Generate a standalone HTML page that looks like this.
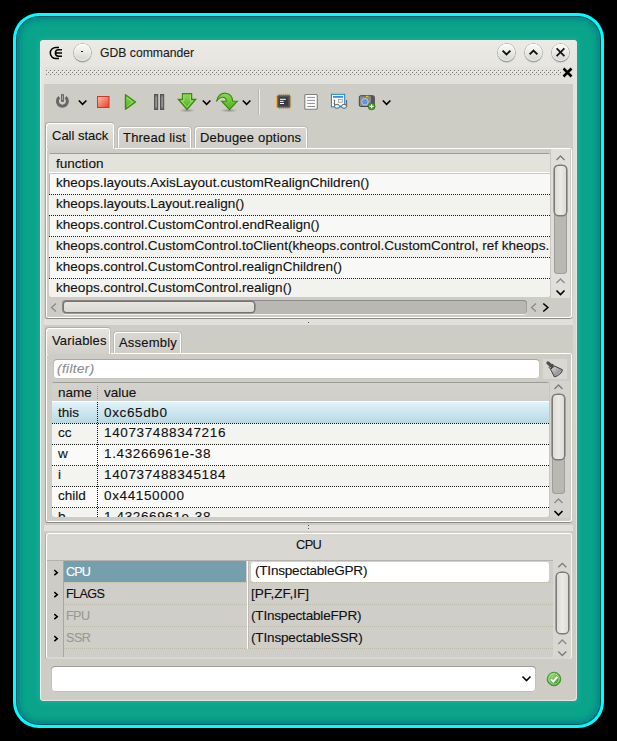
<!DOCTYPE html>
<html><head><meta charset="utf-8">
<style>
*{box-sizing:border-box;margin:0;padding:0}
html,body{width:617px;height:741px;overflow:hidden;background:#000}
body{position:relative;font-family:"Liberation Sans",sans-serif;font-size:13px;color:#1a1a1a;-webkit-text-stroke:0.12px currentColor}
.a{position:absolute}
#frame{left:13px;top:13px;width:591px;height:715px;border-radius:26px;background:#00ffff}
#f2{left:16px;top:16px;width:585px;height:709px;border-radius:23px;background:#005a5e}
#f3{left:17px;top:17px;width:583px;height:707px;border-radius:22px;background:#068a8c}
#f4{left:19px;top:19px;width:579px;height:703px;border-radius:20px;background:#0aa48a;box-shadow:inset 0 0 0 1px #06908c,inset 0 0 4px 3px #069488}
#win{left:40px;top:40px;width:537px;height:661px;border-radius:4px;background:#cdccc5;overflow:hidden;
 box-shadow:inset 1px 1px 0 #f4f0ec, inset -1px -1px 0 #e8e4e0, 0 0 0 2px #12a894, 0 0 4px 4px rgba(16,168,148,.9)}
#title{left:0;top:0;width:537px;height:27px;background:linear-gradient(#eceae5,#e6e5df)}
.t{white-space:nowrap}
.crow{position:absolute;left:0;width:489px;height:22px;border-bottom:1px dotted #bdbca8}
.crow span{position:absolute;white-space:nowrap;font-size:13.55px;color:#111;top:3px}
.arr{position:absolute;left:6px;top:8px}

.vrow{position:absolute;left:0;right:0;height:21px;border-bottom:1px dotted #1a1a1a}
.vrow span{position:absolute;white-space:nowrap;font-size:13.55px;color:#111;top:1px}
.vrow .c1{left:6px}.vrow .c2{left:52px;letter-spacing:0.6px}

.tab{position:absolute;border:1px solid #b6b4ae;border-bottom:none;border-radius:4px 4px 0 0;box-shadow:inset 1px 1px 0 #fff,inset -1px 0 0 #fff;}
.tab.sel{background:linear-gradient(#e6e5e0,#d0cfc9);border-color:#b0aea9 #c4c3bd #c4c3bd #a8a6a2}
.tab.uns{background:linear-gradient(#d9d7d1,#cfcdc7);border-color:#bdbbb6}
.tab span{position:absolute;white-space:nowrap;font-size:13px;color:#111}
.pane{position:absolute;border-radius:3px;box-shadow:inset 1px 1px 0 #fff,inset -1px -1px 0 #fff;border-left:1px solid #a8a6a2;border-bottom:1px solid #8a8884;}
.tree{position:absolute;background:#f8f8f6;border-radius:3px;overflow:hidden;box-shadow:inset 0 1px 0 #a09e9a,inset 1px 0 0 #b8b6b2}
.hdr{position:absolute;left:0;top:0;right:0;background:linear-gradient(#e4e4dd,#e2e2db);border-bottom:1px solid #fff;border-top:1px solid #9c9b96}
.hdr span,.row span{position:absolute;white-space:nowrap;font-size:13.55px;color:#111}
.row{position:absolute;left:0;right:0;height:21px;border-bottom:1px dotted #1a1a1a}
.row.alt{background:#f2f2ef}
.vtrack{position:absolute;background:#b9b8b2;border-radius:4px;box-shadow:inset 0 0 0 1px #9f9e98}
.slider{position:absolute;border-radius:4px;background:linear-gradient(90deg,#dddcd6,#ebeae5 50%,#dcdbd5);box-shadow:0 0 0 1.6px #7c7b78}
.hslider{position:absolute;border-radius:3px;background:linear-gradient(#e6e5e0,#dad9d4);box-shadow:0 0 0 1.6px #777673}

.btn{width:17px;height:17px;border-radius:50%;background:linear-gradient(#fbfbfa,#e9e9e6 50%,#d2d2ce);box-shadow:0 0 0 0.8px #a8a8a4,0 1.3px 1.2px rgba(0,0,0,.45),inset 0 1px 0 #fff,inset 0 -1px 1px rgba(255,255,255,.6)}
.btn i,.btn svg{position:absolute;left:0;top:0}
#handle{left:4px;top:27px;width:529px;height:17px;background-color:#e2e1db}

</style></head><body>
<div id="frame" class="a"></div><div id="f2" class="a"></div><div id="f3" class="a"></div><div id="f4" class="a"></div>
<div id="win" class="a">
  <div id="title" class="a"></div>
  <div class="a" style="left:1px;top:27px;width:3px;height:500px;background:linear-gradient(#e6e5e0,#dddcd6 30%,#cdccc5)"></div>
  <div class="a" style="left:533px;top:27px;width:3px;height:500px;background:linear-gradient(#e6e5e0,#dddcd6 30%,#cdccc5)"></div>
  <svg class="a" style="left:6px;top:4px" width="20" height="18" viewBox="0 0 20 18"><g fill="none" stroke="#000" stroke-width="1.5"><path d="M13,3.4H9.9A5.6,5.6 0 0 0 9.9,14.6H13"/><path d="M16,5.8H12.6A3.2,3.2 0 0 0 12.6,12.2H16M9.5,9H16"/></g></svg>
  <div class="a btn" style="left:33.5px;top:3.5px"><i style="left:7.6px;top:7px;width:1.8px;height:1.8px;background:#000;border-radius:1px"></i></div>
  <div class="a t" style="left:60px;top:6px;font-size:12.2px;color:#1c1c1c">GDB commander</div>
  <div class="a btn" style="left:457.5px;top:3.5px"><svg width="17" height="17"><path d="M4.6,6.6L8.5,10.5L12.4,6.6" fill="none" stroke="#111" stroke-width="1.9"/></svg></div>
  <div class="a btn" style="left:484.5px;top:3.5px"><svg width="17" height="17"><path d="M4.6,10.4L8.5,6.5L12.4,10.4" fill="none" stroke="#111" stroke-width="1.9"/></svg></div>
  <div class="a btn" style="left:511.5px;top:3.5px"><svg width="17" height="17"><path d="M4.6,4.4L12.4,12.2M12.4,4.4L4.6,12.2" fill="none" stroke="#111" stroke-width="1.7"/></svg></div>
  <div id="handle" class="a"><svg class="a" style="left:0;top:0" width="529" height="17"><defs><pattern id="dp" width="4" height="4" patternUnits="userSpaceOnUse" x="2" y="3"><rect x="0" y="0" width="1" height="1" fill="#7d7d79"/><rect x="2" y="2" width="1" height="1" fill="#7d7d79"/><rect x="1" y="1" width="1" height="1" fill="#f2f1ed"/></pattern></defs><rect x="2" y="3" width="515" height="5" fill="url(#dp)"/></svg></div>
  <svg class="a" style="left:522px;top:27px" width="11" height="11"><path d="M1.5,1.5L9.5,9.5M9.5,1.5L1.5,9.5" stroke="#000" stroke-width="2.6"/></svg>
</div>

<svg class="a" style="left:0;top:84px" width="617" height="36" viewBox="0 84 617 36">
 <defs>
  <linearGradient id="gR" x1="0" y1="0" x2="1" y2="1"><stop offset="0" stop-color="#fcc0b0"/><stop offset="1" stop-color="#f03a20"/></linearGradient>
  <linearGradient id="gG" x1="0" y1="0" x2="0" y2="1"><stop offset="0" stop-color="#8fd65a"/><stop offset="1" stop-color="#4fb01a"/></linearGradient>
  <linearGradient id="gP" x1="0" y1="0" x2="1" y2="0"><stop offset="0" stop-color="#555"/><stop offset=".5" stop-color="#777"/><stop offset="1" stop-color="#555"/></linearGradient>
  <radialGradient id="gS"><stop offset="0" stop-color="#000" stop-opacity=".28"/><stop offset="1" stop-color="#000" stop-opacity="0"/></radialGradient>
 </defs>
 <!-- power -->
 <path d="M59.3,97.3A5,5 0 1 0 65.5,97.3" fill="none" stroke="#686868" stroke-width="3"/>
 <rect x="61" y="94" width="3" height="8" rx="1" fill="#686868"/>
 <path d="M62.5,95.5V100" stroke="#bdbdbd" stroke-width="0.8"/>
 <!-- chevrons -->
 <path d="M78.8,100.5L82.6,104.3L86.4,100.5" fill="none" stroke="#000" stroke-width="1.6"/>
 <path d="M202.8,100.5L206.6,104.3L210.4,100.5" fill="none" stroke="#000" stroke-width="1.6"/>
 <path d="M242.8,100.5L246.6,104.3L250.4,100.5" fill="none" stroke="#000" stroke-width="1.6"/>
 <path d="M382.8,100.5L386.6,104.3L390.4,100.5" fill="none" stroke="#000" stroke-width="1.6"/>
 <!-- stop -->
 <rect x="97.5" y="96.5" width="11.5" height="11" fill="url(#gR)" stroke="#c43a28" stroke-width="1"/>
 <!-- play -->
 <path d="M125.5,94.8L135.5,102L125.5,109.2Z" fill="url(#gG)" stroke="#3c8c12" stroke-width="1.4" stroke-linejoin="round"/>
 <path d="M127,97.5L132.8,102L127,106.5" fill="none" stroke="#a8e080" stroke-width="0.8"/>
 <!-- pause -->
 <rect x="154.5" y="94.5" width="3.2" height="15" fill="url(#gP)" stroke="#545454" stroke-width="1"/>
 <rect x="160.5" y="94.5" width="3.2" height="15" fill="url(#gP)" stroke="#545454" stroke-width="1"/>
 <path d="M156.1,96.5V107.5M162.1,96.5V107.5" stroke="#c9c9c9" stroke-width="0.7"/>
 <!-- step into -->
 <ellipse cx="187" cy="110.5" rx="8" ry="2" fill="url(#gS)"/>
 <path d="M182.5,93.7H191.6V99.5H195.6L187,109.4L178.4,99.5H182.5Z" fill="url(#gG)" stroke="#3a8c10" stroke-width="1.3" stroke-linejoin="miter"/>
 <path d="M183.8,95V100.8H181.4L187,107.3L192.6,100.8H190.3V95" fill="none" stroke="#b0e590" stroke-width="0.8"/>
 <!-- step over -->
 <ellipse cx="229" cy="110.5" rx="9" ry="2" fill="url(#gS)"/>
 <path d="M216.5,101.5C217.5,95 222,92.8 225.5,93.2C230,93.7 232.5,97 232.7,101.2H237.3L229.5,109.6L221.7,101.2H226.5C226.3,98.5 224.5,97 222.5,97.2C220,97.4 218,99 216.5,101.5Z" fill="url(#gG)" stroke="#3a8c10" stroke-width="1.1" stroke-linejoin="miter"/>
 <!-- separator -->
 <path d="M258.5,89V115" stroke="#b8b6b0" stroke-width="1"/><path d="M259.5,89V115" stroke="#f0efea" stroke-width="1"/>
 <!-- cpu -->
 <g fill="#e8a33a">
  <rect x="279" y="93.8" width="1.2" height="1.2"/><rect x="281" y="93.8" width="1.2" height="1.2"/><rect x="283" y="93.8" width="1.2" height="1.2"/><rect x="285" y="93.8" width="1.2" height="1.2"/><rect x="287" y="93.8" width="1.2" height="1.2"/><rect x="289" y="93.8" width="1.2" height="1.2"/>
  <rect x="279" y="108" width="1.2" height="1.2"/><rect x="281" y="108" width="1.2" height="1.2"/><rect x="283" y="108" width="1.2" height="1.2"/><rect x="285" y="108" width="1.2" height="1.2"/><rect x="287" y="108" width="1.2" height="1.2"/><rect x="289" y="108" width="1.2" height="1.2"/>
  <rect x="276" y="96" width="1.2" height="1.2"/><rect x="276" y="98" width="1.2" height="1.2"/><rect x="276" y="100" width="1.2" height="1.2"/><rect x="276" y="102" width="1.2" height="1.2"/><rect x="276" y="104" width="1.2" height="1.2"/><rect x="276" y="106" width="1.2" height="1.2"/>
  <rect x="290.2" y="96" width="1.2" height="1.2"/><rect x="290.2" y="98" width="1.2" height="1.2"/><rect x="290.2" y="100" width="1.2" height="1.2"/><rect x="290.2" y="102" width="1.2" height="1.2"/><rect x="290.2" y="104" width="1.2" height="1.2"/><rect x="290.2" y="106" width="1.2" height="1.2"/>
 </g>
 <rect x="277.5" y="95.3" width="12.5" height="12.3" rx="1" fill="#4f5256" stroke="#6a6d71" stroke-width="0.8"/>
 <rect x="279.3" y="97.2" width="8.8" height="8.5" fill="#3a3c40"/>
 <path d="M280,99.3H285.8M280,101.4H283.6M280,103.5H284" stroke="#fff" stroke-width="1"/>
 <!-- document -->
 <rect x="304.8" y="94.5" width="12.5" height="14.7" rx="1" fill="#fff" stroke="#7e7e7b" stroke-width="1.1"/>
 <path d="M307.2,97.4H315M307.2,100.4H315M307.2,103.4H315M307.2,106.5H315" stroke="#7f7f7f" stroke-width="0.9"/>
 <!-- window glasses -->
 <rect x="331.4" y="94.3" width="13.3" height="12.5" fill="#fff" stroke="#1b80cc" stroke-width="1"/>
 <rect x="333" y="96" width="10" height="1.8" fill="#2b90e0"/>
 <rect x="338.5" y="99.5" width="4" height="2.8" fill="#eee" stroke="#888" stroke-width="0.6"/>
 <path d="M334,99.5V101M334,102.5V104" stroke="#777" stroke-width="0.7"/>
 <path d="M334.6,100V106.5M346.6,100V106.5" stroke="#555" stroke-width="0.9"/>
 <ellipse cx="337" cy="106.3" rx="2.6" ry="2" fill="#d8f0fa" stroke="#5a5a5a" stroke-width="0.9"/>
 <ellipse cx="344" cy="106.3" rx="2.6" ry="2" fill="#d8f0fa" stroke="#5a5a5a" stroke-width="0.9"/>
 <rect x="339.8" y="105.5" width="1.5" height="1.2" fill="#1b80cc"/>
 <!-- camera -->
 <rect x="359.3" y="95.7" width="15" height="10.8" rx="1.5" fill="#8a8a8a" stroke="#3a3a3a" stroke-width="0.9"/>
 <rect x="371" y="96" width="3" height="10" fill="#555"/>
 <rect x="366" y="95.8" width="2.5" height="1.3" fill="#f0c020"/>
 <circle cx="364.9" cy="101.8" r="3.3" fill="#5b97e0" stroke="#d8d8d8" stroke-width="0.8"/>
 <circle cx="371.6" cy="106.4" r="3.5" fill="#3e9a22" stroke="#2a7010" stroke-width="0.6"/>
 <path d="M371.6,104.3V108.5M369.5,106.4H373.7" stroke="#fff" stroke-width="1.3"/>
</svg>

<!-- tabs 1 -->
<div class="tab uns" style="left:117px;top:126px;width:75px;height:23px"><span style="left:5px;top:3px;letter-spacing:0.2px">Thread list</span></div>
<div class="tab uns" style="left:194px;top:126px;width:114px;height:23px"><span style="left:5px;top:3px;letter-spacing:0.2px">Debugee options</span></div>
<div class="pane" style="left:45px;top:148px;width:527px;height:171px"></div>
<div class="tab sel" style="left:45px;top:122px;width:70px;height:27px"><span style="left:6px;top:5px">Call stack</span></div>
<!-- tree 1 -->
<div class="tree" style="left:49px;top:153px;width:501px;height:144px">
 <div class="hdr" style="height:20px;box-shadow:0 1px 0 #c9c8c3"><span style="left:7px;top:2px">function</span></div>
 <div class="row" style="top:20px;height:22px"><span style="left:7px;top:2px">kheops.layouts.AxisLayout.customRealignChildren()</span></div>
 <div class="row alt" style="top:42px"><span style="left:7px;top:1px">kheops.layouts.Layout.realign()</span></div>
 <div class="row" style="top:63px"><span style="left:7px;top:1px">kheops.control.CustomControl.endRealign()</span></div>
 <div class="row alt" style="top:84px"><span style="left:7px;top:1px">kheops.control.CustomControl.toClient(kheops.control.CustomControl, ref kheops.</span></div>
 <div class="row" style="top:105px"><span style="left:7px;top:1px">kheops.control.CustomControl.realignChildren()</span></div>
 <div class="row alt" style="top:126px;border-bottom:none"><span style="left:7px;top:1px">kheops.control.CustomControl.realign()</span></div>
</div>
<div class="a" style="left:550px;top:153px;width:1px;height:144px;background:#c8c7c2"></div>
<div class="a" style="left:551px;top:149px;width:19px;height:149px;background:#e0dfda"></div>
<div class="vtrack" style="left:554px;top:165px;width:13px;height:109px"></div>
<div class="slider" style="left:555px;top:166px;width:11px;height:49px"></div>
<div class="a" style="left:62px;top:300px;width:465px;height:14px;background:#b9b8b2;border-radius:4px;box-shadow:inset 0 1px 0 #8e8d89,inset 1px 0 0 #a3a29d,inset -1px 0 0 #a3a29d,0 1px 0 #f2f2ee"></div>
<div class="hslider" style="left:63.5px;top:301.5px;width:190px;height:10.5px"></div>
<svg class="a" style="left:0;top:148px" width="617" height="172" viewBox="0 148 617 172">
 <path d="M556.5,160L560.5,156L564.5,160" fill="none" stroke="#7a7a78" stroke-width="1.3"/>
 <path d="M556.5,283L560.5,279L564.5,283" fill="none" stroke="#8a8a88" stroke-width="1.3"/>
 <path d="M556.5,290.5L560.5,294.5L564.5,290.5" fill="none" stroke="#000" stroke-width="1.6"/>
 <path d="M56,303.5L51.5,307.5L56,311.5" fill="none" stroke="#8a8a88" stroke-width="1.3"/>
 <path d="M536,303.5L531.5,307.5L536,311.5" fill="none" stroke="#8a8a88" stroke-width="1.3"/>
 <path d="M543.3,303.5L547.8,307.5L543.3,311.5" fill="none" stroke="#000" stroke-width="1.6"/>
</svg>
<div class="a" style="left:44px;top:319px;width:529px;height:6px;background:#e1e0da"></div>
<div class="a" style="left:308px;top:322px;width:1px;height:1px;background:#555"></div>

<!-- tabs 2 -->
<div class="tab uns" style="left:113px;top:331px;width:69px;height:23px"><span style="left:5px;top:3px;letter-spacing:0.2px">Assembly</span></div>
<div class="pane" style="left:45px;top:353px;width:527px;height:170px"></div>
<div class="tab sel" style="left:45px;top:327px;width:66px;height:27px"><span style="left:6px;top:5px;letter-spacing:0.15px">Variables</span></div>
<div class="a" style="left:53px;top:359px;width:487px;height:20px;background:#fff;border-radius:4px;box-shadow:inset 0 1px 0 #a8a7a3,inset 0 0 0 1px #c4c3be"></div>
<div class="a t" style="left:57px;top:361px;font-size:13.3px;font-style:italic;color:#8a8a88;letter-spacing:0.45px">(filter)</div>
<div class="a" style="left:543px;top:359px;width:24px;height:20px;background:#d9d8d2"></div>
<svg class="a" style="left:543px;top:358px" width="24" height="22" viewBox="0 0 24 22">
 <defs><linearGradient id="gB" x1="0" y1="0" x2="1" y2="1"><stop offset="0" stop-color="#e0e0e0"/><stop offset=".6" stop-color="#9a9a9a"/><stop offset="1" stop-color="#c8c8c8"/></linearGradient></defs>
 <path d="M7.6,11.2L11.6,8.1L19.4,11.7C19.2,14.8 15.5,17.8 11.4,18.9Z" fill="url(#gB)" stroke="#3c3c3c" stroke-width="1" stroke-linejoin="round"/>
 <path d="M6.2,10.2L10.6,6.8" stroke="#3c3c3c" stroke-width="2.6"/>
 <path d="M6.2,10.2L10.6,6.8" stroke="#d8d8d8" stroke-width="1"/>
 <path d="M5,4.9L8.6,7.9" stroke="#4e4e4e" stroke-width="3.3" stroke-linecap="round"/>
</svg>
<!-- tree 2 -->
<div class="tree" style="left:52px;top:382px;width:497px;height:135px">
 <div class="hdr" style="height:20px;background:linear-gradient(#d3d2cc,#cfcec8);box-shadow:0 1px 0 #c0c0bb"><span style="left:6px;top:2px">name</span><span style="left:52px;top:2px">value</span></div>
 <div class="a" style="left:45px;top:4px;width:1px;height:13px;border-left:1px dotted #999"></div>
 <div class="vrow" style="top:20px;height:22px;background:linear-gradient(#e0f3fa,#b9d8e2);border-bottom-color:#111"><span class="c1" style="top:2.5px">this</span><span class="c2" style="top:2.5px">0xc65db0</span></div>
 <div class="vrow" style="top:42px;background:#f3f3f0"><span class="c1">cc</span><span class="c2">140737488347216</span></div>
 <div class="vrow" style="top:63px;background:#fafaf9"><span class="c1">w</span><span class="c2">1.43266961e-38</span></div>
 <div class="vrow" style="top:84px;background:#f3f3f0"><span class="c1">i</span><span class="c2">140737488345184</span></div>
 <div class="vrow" style="top:105px;background:#fafaf9"><span class="c1">child</span><span class="c2">0x44150000</span></div>
 <div class="vrow" style="top:126px;background:#f3f3f0;border-bottom:none"><span class="c1">b</span><span class="c2">1.43266961e-38</span></div>
 <div class="a" style="left:45px;top:20px;width:1px;height:115px;border-left:1px dotted #111"></div>
</div>
<div class="a" style="left:549px;top:382px;width:1px;height:135px;background:#c8c7c2"></div>
<div class="a" style="left:550px;top:381px;width:20px;height:137px;background:#d4d3cd"></div>
<div class="vtrack" style="left:552px;top:394px;width:13px;height:100px"></div>
<div class="slider" style="left:553px;top:395px;width:11px;height:64px"></div>
<svg class="a" style="left:0;top:380px" width="617" height="140" viewBox="0 380 617 140">
 <path d="M554.5,389L558.5,385L562.5,389" fill="none" stroke="#7a7a78" stroke-width="1.3"/>
 <path d="M554.5,503L558.5,499L562.5,503" fill="none" stroke="#8a8a88" stroke-width="1.3"/>
 <path d="M554.5,511L558.5,515L562.5,511" fill="none" stroke="#000" stroke-width="1.6"/>
</svg>
<div class="a" style="left:44px;top:525px;width:529px;height:6px;background:#e1e0da"></div>
<div class="a" style="left:308px;top:525px;width:1px;height:1px;background:#555"></div>
<div class="a" style="left:308px;top:528px;width:1px;height:1px;background:#555"></div>

<!-- cpu panel -->
<div class="a" style="left:45px;top:533px;width:527px;height:126px;border-radius:3px;background:#d8d7d1;box-shadow:inset 1px 1px 0 #fff,inset -1px 0 0 #f4f3ef;border-left:1px solid #b0aea9"></div>
<div class="a t" style="left:296px;top:537px;font-size:12.8px;color:#111;letter-spacing:-0.6px">CPU</div>
<div class="a" style="left:47px;top:560px;width:506px;height:1px;background:#b3b2ac"></div>
<div class="a" style="left:47px;top:561px;width:506px;height:96px;background:#cfcec8;border-radius:0 0 0 3px;overflow:hidden">
 <div class="a" style="left:0;top:0;width:16px;height:96px;background:#cdccc6"></div>
 <div class="a" style="left:16px;top:0;width:1px;height:96px;background:#aaa994"></div>
 <div class="a" style="left:200px;top:0;width:1px;height:88px;background:#fbfbf8"></div>
 <div class="a" style="left:201px;top:0;width:1px;height:88px;background:#bcbbb5"></div>
 <div class="crow" style="left:17px;top:0;height:22px"><div class="a" style="left:0;top:0;width:182px;height:21px;background:#769fae"></div><span style="left:2px;top:3.5px;color:#fff;font-size:12.6px;letter-spacing:-0.9px">CPU</span></div>
 <div class="crow" style="left:17px;top:22px"><span style="left:2px;top:3.5px;font-size:12.6px;letter-spacing:-0.6px">FLAGS</span><span style="left:187px">[PF,ZF,IF]</span></div>
 <div class="crow" style="left:17px;top:44px"><span style="left:2px;top:3.5px;color:#9a9995;font-size:12.6px;letter-spacing:-0.6px">FPU</span><span style="left:187px;letter-spacing:-0.2px">(TInspectableFPR)</span></div>
 <div class="crow" style="left:17px;top:66px"><span style="left:2px;top:3.5px;color:#9a9995;font-size:12.6px;letter-spacing:-0.5px">SSR</span><span style="left:187px;letter-spacing:-0.17px">(TInspectableSSR)</span></div>
 <div class="a" style="left:204px;top:0px;width:298px;height:21px;background:#fff;border-radius:3px;box-shadow:inset 0 1px 0 #d0d0cc"></div>
 <div class="a t" style="left:208px;top:2px;font-size:13.55px;color:#111;letter-spacing:-0.22px">(TInspectableGPR)</div>
 <svg class="a" style="left:0;top:0" width="16" height="96"><g fill="none" stroke="#000" stroke-width="1.5"><path d="M7.3,9.2L10.3,11.7L7.3,14.2"/><path d="M7.3,31.2L10.3,33.7L7.3,36.2"/><path d="M7.3,53.2L10.3,55.7L7.3,58.2"/><path d="M7.3,75.2L10.3,77.7L7.3,80.2"/></g></svg>
</div>
<div class="a" style="left:553px;top:561px;width:17px;height:97px;background:#d8d7d1"></div>
<div class="slider" style="left:556.5px;top:573px;width:11px;height:60px"></div>
<svg class="a" style="left:0;top:555px" width="617" height="110" viewBox="0 555 617 110">
 <path d="M558.3,567.3L562.3,563.3L566.3,567.3" fill="none" stroke="#7a7a78" stroke-width="1.3"/>
 <path d="M558.3,644L562.3,640L566.3,644" fill="none" stroke="#8a8a88" stroke-width="1.3"/>
 <path d="M558.3,651.5L562.3,655.5L566.3,651.5" fill="none" stroke="#7a7a78" stroke-width="1.3"/>
</svg>
<!-- combo -->
<div class="a" style="left:51px;top:666px;width:485px;height:26px;background:#fff;border-radius:4px;box-shadow:inset 0 1px 0 #9c9b97,inset 0 0 0 1px #c2c1bc"></div>
<svg class="a" style="left:0;top:660px" width="617" height="40" viewBox="0 660 617 40">
 <path d="M522.5,676.5L526.5,680.5L530.5,676.5" fill="none" stroke="#000" stroke-width="1.6"/>
 <defs><radialGradient id="gC" cx=".4" cy=".3" r=".8"><stop offset="0" stop-color="#8fd870"/><stop offset="1" stop-color="#2f8a18"/></radialGradient></defs>
 <circle cx="554" cy="679" r="6.8" fill="url(#gC)" stroke="#3a8c22" stroke-width="0.8"/>
 <circle cx="554" cy="679" r="5.2" fill="none" stroke="#c8eeb8" stroke-width="0.7"/>
 <path d="M550.8,679.3L553.2,681.6L557.4,676.8" fill="none" stroke="#fff" stroke-width="1.9"/>
</svg>
</body></html>
